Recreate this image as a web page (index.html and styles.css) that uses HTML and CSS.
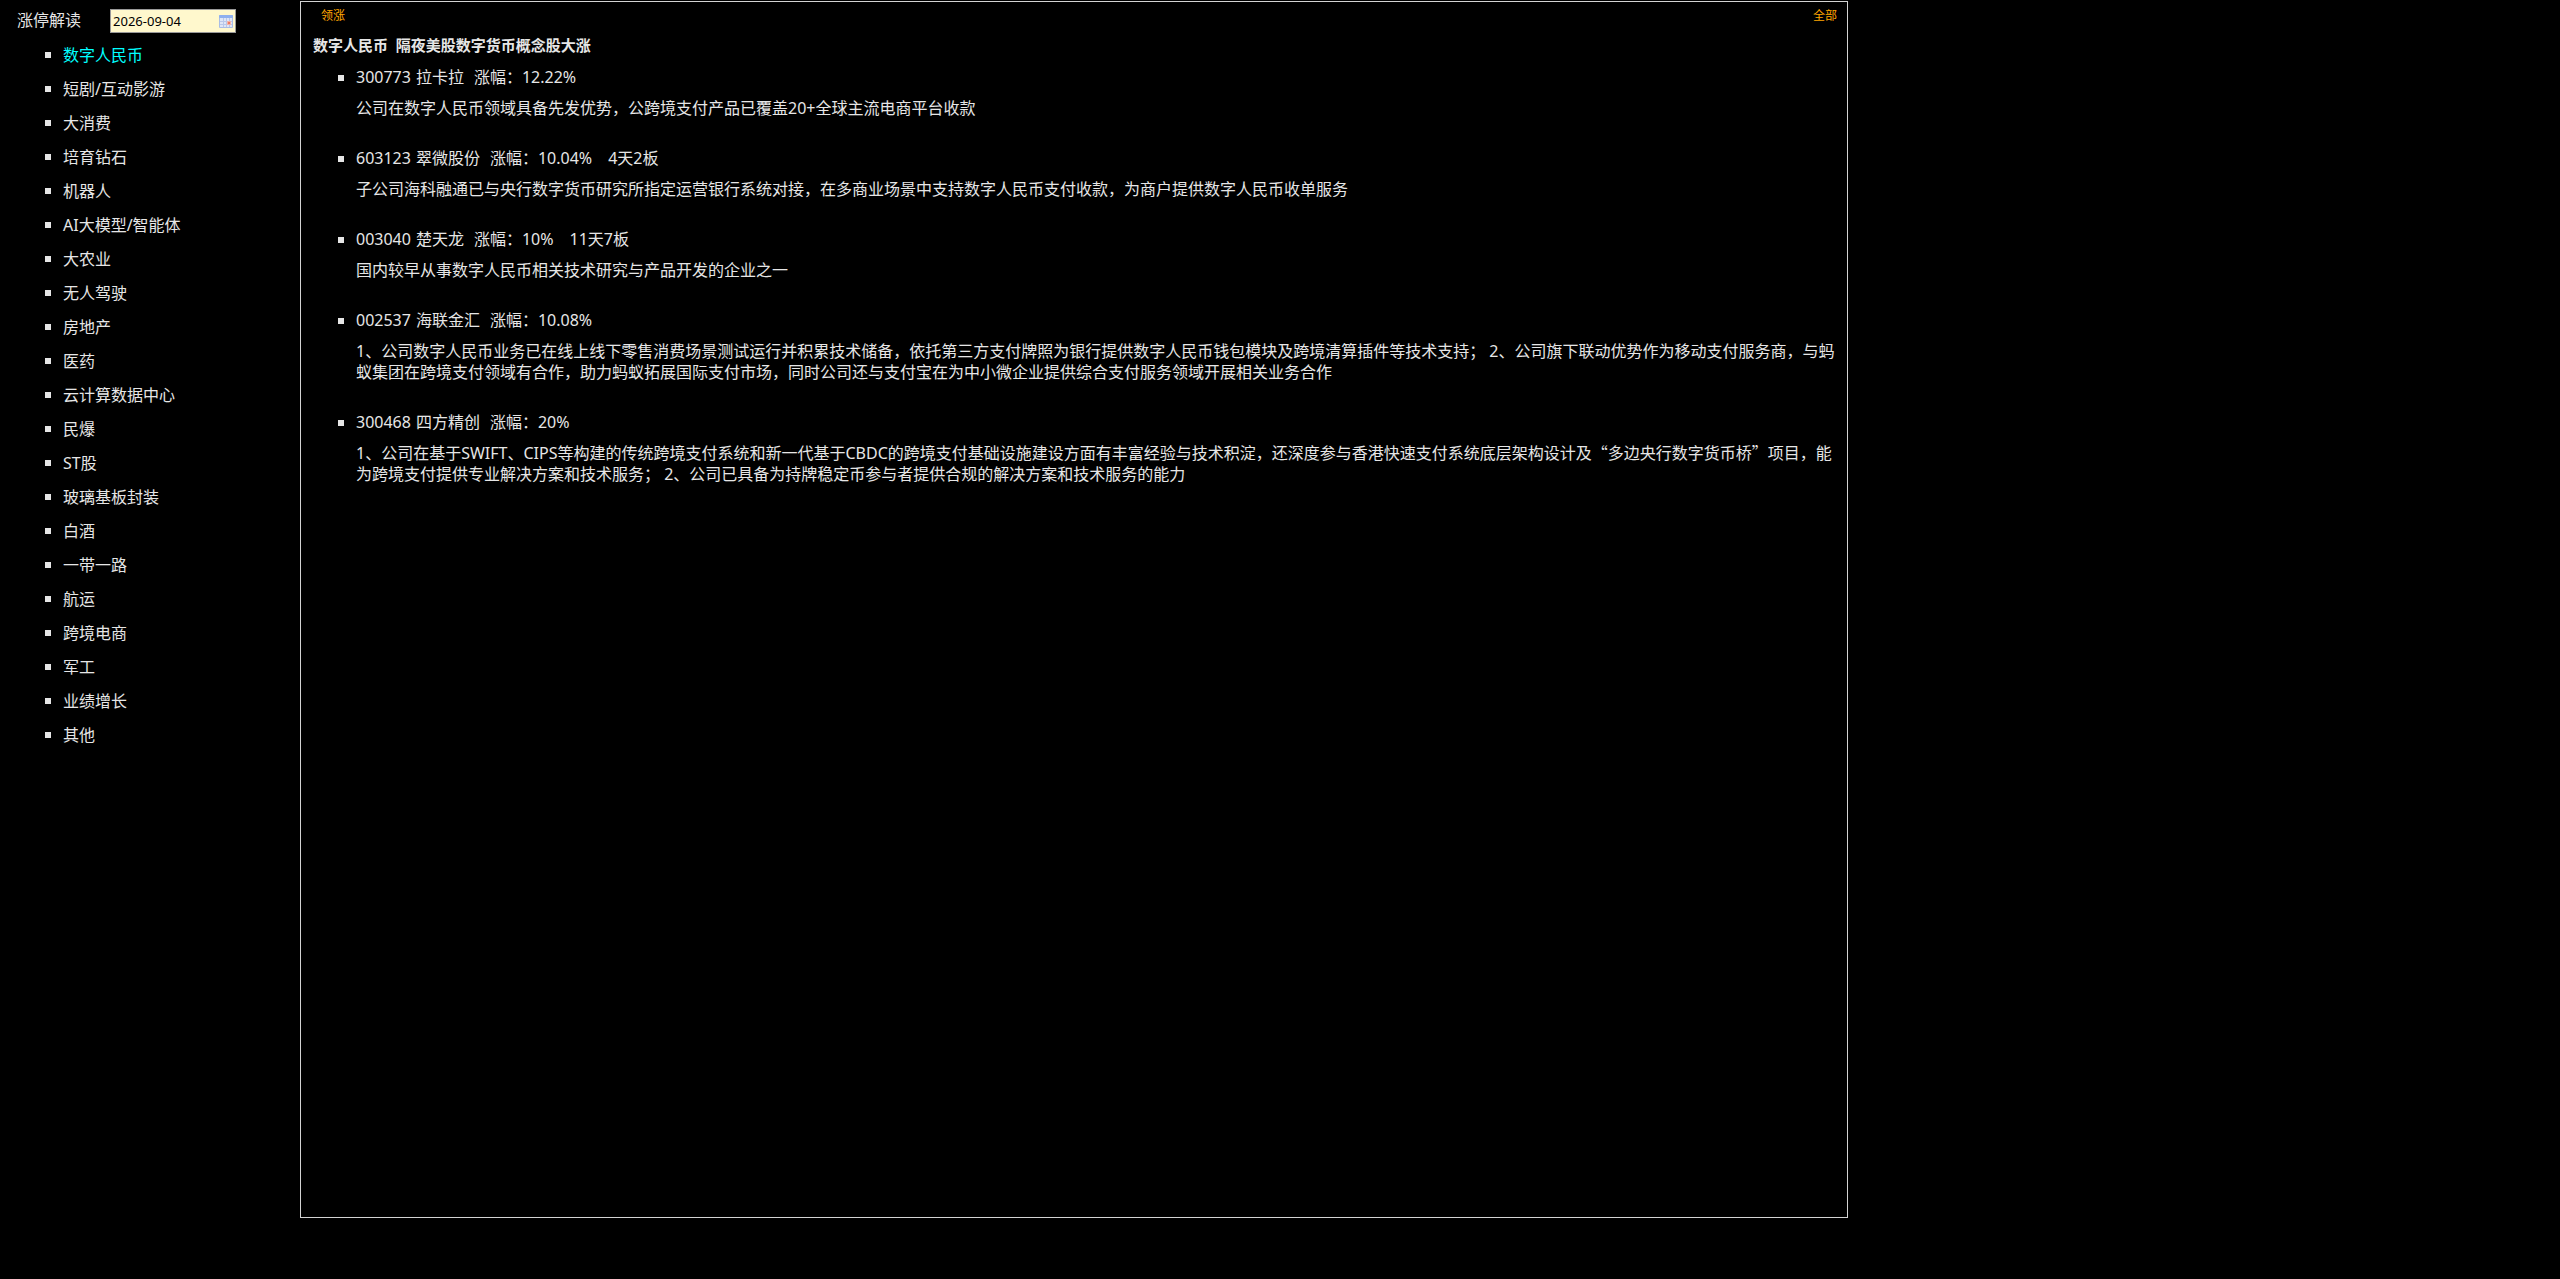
FILE: index.html
```html
<!DOCTYPE html>
<html lang="zh-CN">
<head>
<meta charset="utf-8">
<title>涨停解读</title>
<link rel="stylesheet" href="styles.css">
</head>
<body>
<div class="layout">
  <aside class="sidebar">
    <div class="toolbar">
      <label class="toolbar-label" for="date">涨停解读</label>
      <div class="date-field">
        <input class="date-input" id="date" type="text" value="2026-09-04">
        <svg class="date-icon" viewBox="0 0 14 13" aria-hidden="true">
          <rect x="0" y="0" width="14" height="13" rx="1" fill="#a9bde6"/>
          <rect x="0" y="0" width="14" height="3" rx="1" fill="#8fb0ee"/>
          <rect x="1" y="3" width="12" height="9" fill="#dfe6f6"/>
          <path d="M1 6.500h12M1 9.500h12M4.500 3v9M7.500 3v9M10.500 3v9" stroke="#b9c8ea" fill="none"/>
          <rect x="8" y="6" width="4" height="4" fill="#f3b5aa"/>
          <rect x="9" y="7" width="2" height="2" fill="#ee7a62"/>
        </svg>
      </div>
    </div>
    <ul class="topics">
      <li class="topic"><a class="topic-link topic-link-active" href="#">数字人民币</a></li>
      <li class="topic"><a class="topic-link" href="#">短剧/互动影游</a></li>
      <li class="topic"><a class="topic-link" href="#">大消费</a></li>
      <li class="topic"><a class="topic-link" href="#">培育钻石</a></li>
      <li class="topic"><a class="topic-link" href="#">机器人</a></li>
      <li class="topic"><a class="topic-link" href="#">AI大模型/智能体</a></li>
      <li class="topic"><a class="topic-link" href="#">大农业</a></li>
      <li class="topic"><a class="topic-link" href="#">无人驾驶</a></li>
      <li class="topic"><a class="topic-link" href="#">房地产</a></li>
      <li class="topic"><a class="topic-link" href="#">医药</a></li>
      <li class="topic"><a class="topic-link" href="#">云计算数据中心</a></li>
      <li class="topic"><a class="topic-link" href="#">民爆</a></li>
      <li class="topic"><a class="topic-link" href="#">ST股</a></li>
      <li class="topic"><a class="topic-link" href="#">玻璃基板封装</a></li>
      <li class="topic"><a class="topic-link" href="#">白酒</a></li>
      <li class="topic"><a class="topic-link" href="#">一带一路</a></li>
      <li class="topic"><a class="topic-link" href="#">航运</a></li>
      <li class="topic"><a class="topic-link" href="#">跨境电商</a></li>
      <li class="topic"><a class="topic-link" href="#">军工</a></li>
      <li class="topic"><a class="topic-link" href="#">业绩增长</a></li>
      <li class="topic"><a class="topic-link" href="#">其他</a></li>
    </ul>
  </aside>
  <main class="panel">
    <nav class="panel-nav">
      <a class="panel-link" href="#">领涨</a>
      <a class="panel-link" href="#">全部</a>
    </nav>
    <h1 class="panel-title">数字人民币&nbsp; 隔夜美股数字货币概念股大涨</h1>
    <ul class="stocks">
      <li class="stock">
        <div class="stock-head"><span class="stock-code">300773</span><span class="stock-name">拉卡拉</span><span class="stock-change">涨幅：12.22%</span></div>
        <p class="stock-text">公司在数字人民币领域具备先发优势，公跨境支付产品已覆盖20+全球主流电商平台收款</p>
      </li>
      <li class="stock">
        <div class="stock-head"><span class="stock-code">603123</span><span class="stock-name">翠微股份</span><span class="stock-change">涨幅：10.04%</span><span class="stock-streak">4天2板</span></div>
        <p class="stock-text">子公司海科融通已与央行数字货币研究所指定运营银行系统对接，在多商业场景中支持数字人民币支付收款，为商户提供数字人民币收单服务</p>
      </li>
      <li class="stock">
        <div class="stock-head"><span class="stock-code">003040</span><span class="stock-name">楚天龙</span><span class="stock-change">涨幅：10%</span><span class="stock-streak">11天7板</span></div>
        <p class="stock-text">国内较早从事数字人民币相关技术研究与产品开发的企业之一</p>
      </li>
      <li class="stock">
        <div class="stock-head"><span class="stock-code">002537</span><span class="stock-name">海联金汇</span><span class="stock-change">涨幅：10.08%</span></div>
        <p class="stock-text">1、公司数字人民币业务已在线上线下零售消费场景测试运行并积累技术储备，依托第三方支付牌照为银行提供数字人民币钱包模块及跨境清算插件等技术支持； 2、公司旗下联动优势作为移动支付服务商，与蚂蚁集团在跨境支付领域有合作，助力蚂蚁拓展国际支付市场，同时公司还与支付宝在为中小微企业提供综合支付服务领域开展相关业务合作</p>
      </li>
      <li class="stock">
        <div class="stock-head"><span class="stock-code">300468</span><span class="stock-name">四方精创</span><span class="stock-change">涨幅：20%</span></div>
        <p class="stock-text">1、公司在基于SWIFT、CIPS等构建的传统跨境支付系统和新一代基于CBDC的跨境支付基础设施建设方面有丰富经验与技术积淀，还深度参与香港快速支付系统底层架构设计及<span class="quoted">“多边央行数字货币桥”</span>项目，能为跨境支付提供专业解决方案和技术服务； 2、公司已具备为持牌稳定币参与者提供合规的解决方案和技术服务的能力</p>
      </li>
    </ul>
  </main>
</div>
</body>
</html>
```
FILE: styles.css
```css
* {
  box-sizing: border-box;
}

body {
  margin: 0;
  background: #000;
  color: #e6e6e6;
  font-family: "Noto Sans", "Noto Sans CJK SC", sans-serif;
  font-size: 16px;
  line-height: 21px;
}

ul {
  margin: 0;
  padding: 0;
  list-style: none;
}

a {
  color: inherit;
  text-decoration: none;
}

.layout {
  display: grid;
  grid-template-columns: 300px 1548fr 712fr;
  padding-top: 1px;
}

.toolbar {
  display: flex;
  align-items: center;
  gap: 29px;
  padding: 8px 0 0 17px;
}

.toolbar-label {
  padding-bottom: 2px;
}

.date-field {
  display: flex;
  align-items: center;
  width: 126px;
  height: 24px;
  padding: 0 2px;
  border: 1px solid #999;
  background: #fff8cd;
}

.date-input {
  flex: 1;
  min-width: 0;
  padding: 0 0 1px;
  border: 0;
  outline: 0;
  background: transparent;
  color: #000;
  font-family: inherit;
  font-size: 13px;
  line-height: 20px;
}

.date-icon {
  width: 14px;
  height: 13px;
}

.topics {
  padding: 5px 0 0 45px;
}

.topic {
  display: flex;
  align-items: center;
  gap: 12px;
  height: 34px;
}

.topic::before,
.stock-head::before {
  content: "";
  flex: none;
  width: 6px;
  height: 6px;
  background: #e6e6e6;
}

.topic-link-active {
  color: #0ff;
}

.panel {
  min-height: calc(100vh - 62px);
  padding: 3px 10px 0 12px;
  border: 1px solid #d3d3d3;
}

.panel-nav {
  display: flex;
  justify-content: space-between;
  padding-left: 8px;
  color: orange;
  font-size: 12px;
}

.panel-title {
  margin: 9px 0 11px;
  font-size: 15px;
  font-weight: bold;
}

.stocks {
  padding-left: 25px;
}

.stock {
  padding-bottom: 29px;
}

.stock-head {
  display: flex;
  align-items: center;
}

.stock-code {
  padding: 0 5px 0 12px;
}

.stock-change {
  padding-left: 10px;
}

.stock-streak {
  padding-left: 16px;
}

.stock-text {
  margin: 10px 0 0;
  padding-left: 18px;
}

/* Keeps the quotation marks full width */
.quoted {
  font-family: "Noto Sans CJK SC", sans-serif;
  line-height: 1;
}
```
